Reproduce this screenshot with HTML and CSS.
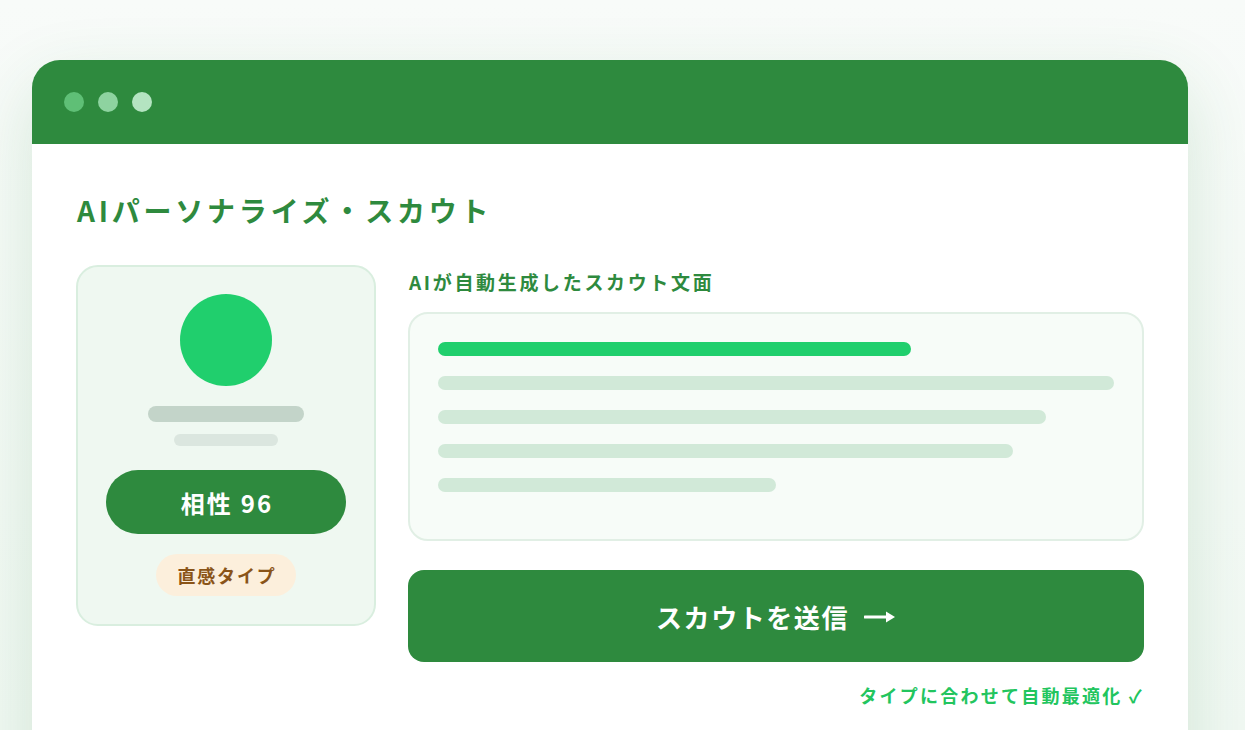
FILE: index.html
```html
<!DOCTYPE html>
<html lang="ja">
<head>
<meta charset="utf-8">
<title>AIパーソナライズ・スカウト</title>
<link rel="stylesheet" href="styles.css">
</head>
<body>
<div class="page">
  <div class="window">
    <div class="titlebar">
      <span class="dot d1"></span>
      <span class="dot d2"></span>
      <span class="dot d3"></span>
    </div>
    <div class="content">
      <h1 class="title">AIパーソナライズ・スカウト</h1>
      <div class="main">
        <div class="profile">
          <div class="avatar"></div>
          <div class="bar name"></div>
          <div class="bar sub"></div>
          <div class="score">相性 96</div>
          <div class="tag">直感タイプ</div>
        </div>
        <div class="right">
          <div class="label">AIが自動生成したスカウト文面</div>
          <div class="textbox">
            <div class="line accent" style="width:70%"></div>
            <div class="line" style="width:100%"></div>
            <div class="line" style="width:90%"></div>
            <div class="line" style="width:85%"></div>
            <div class="line" style="width:50%"></div>
          </div>
          <button class="send"><span class="send-text">スカウトを送信</span><svg class="arrow" width="32" height="14" viewBox="0 0 32 14"><path d="M1 7 H24" stroke="#ffffff" stroke-width="3" stroke-linecap="round"/><path d="M22 1.5 L31 7 L22 12.5 Z" fill="#ffffff"/></svg></button>
          <div class="note">タイプに合わせて自動最適化 ✓</div>
        </div>
      </div>
    </div>
  </div>
</div>
</body>
</html>
```

FILE: styles.css
```css
* { box-sizing: border-box; }
html, body { margin: 0; padding: 0; }
body {
  width: 1245px;
  height: 730px;
  overflow: hidden;
  background: linear-gradient(180deg, #f8fbf9 0%, #f1f8f3 100%);
  font-family: "Noto Sans CJK JP", "Noto Sans", sans-serif;
}
.page {
  padding: 60px 0 0 32px;
}
.window {
  width: 1156px;
  height: 760px;
  background: #ffffff;
  border-radius: 28px 28px 0 0;
  overflow: hidden;
  box-shadow: 0 24px 70px rgba(46, 139, 62, 0.16);
}
.titlebar {
  height: 84px;
  background: #2e8a3e;
  display: flex;
  align-items: center;
  gap: 14px;
  padding-left: 32px;
}
.dot {
  width: 20px;
  height: 20px;
  border-radius: 50%;
}
.d1 { background: #5fbf76; }
.d2 { background: #8ed3a0; }
.d3 { background: #b4e4c1; }
.content {
  padding: 46px 44px 0 44px;
}
.title {
  margin: 0;
  font-size: 28px;
  line-height: 40px;
  font-weight: 700;
  letter-spacing: 0.135em;
  color: #2e8a3e;
  padding-left: 1px;
}
.main {
  display: flex;
  gap: 32px;
  margin-top: 35px;
}
.profile {
  width: 300px;
  height: 361px;
  background: #eff8f1;
  border: 2px solid #d9eedf;
  border-radius: 22px;
  display: flex;
  flex-direction: column;
  align-items: center;
  padding-top: 27px;
}
.avatar {
  width: 92px;
  height: 92px;
  border-radius: 50%;
  background: #20cf6d;
}
.bar { border-radius: 8px; }
.name {
  width: 156px;
  height: 16px;
  background: #c3d4c9;
  margin-top: 20px;
}
.sub {
  width: 104px;
  height: 12px;
  background: #dbe6df;
  margin-top: 12px;
}
.score {
  width: 240px;
  height: 64px;
  margin-top: 24px;
  border-radius: 32px;
  background: #2e8a3e;
  color: #ffffff;
  font-size: 24px;
  font-weight: 700;
  letter-spacing: 0.09em;
  display: flex;
  align-items: center;
  justify-content: center;
  padding-left: 2px;
}
.tag {
  width: 140px;
  height: 42px;
  margin-top: 20px;
  border-radius: 21px;
  background: #fcefdc;
  color: #8a5418;
  font-size: 18px;
  font-weight: 700;
  letter-spacing: 0.1em;
  display: flex;
  align-items: center;
  justify-content: center;
  padding-left: 2px;
}
.right {
  flex: 1;
  display: flex;
  flex-direction: column;
}
.label {
  font-size: 19px;
  line-height: 26px;
  font-weight: 700;
  letter-spacing: 0.14em;
  color: #2e8a3e;
  margin-top: 4px;
  padding-left: 1px;
}
.textbox {
  margin-top: 17px;
  height: 229px;
  background: #f7fcf8;
  border: 2px solid #e1efe5;
  border-radius: 20px;
  padding: 28px 28px 0 28px;
  display: flex;
  flex-direction: column;
  gap: 20px;
}
.line {
  height: 14px;
  border-radius: 7px;
  background: #d1e9d8;
}
.line.accent { background: #20cf6d; }
.send {
  margin-top: 29px;
  height: 92px;
  border: none;
  border-radius: 16px;
  background: #2e8a3e;
  color: #ffffff;
  font-family: inherit;
  font-size: 26px;
  font-weight: 700;
  display: flex;
  align-items: center;
  justify-content: center;
  gap: 15px;
  padding: 0;
}
.send-text {
  letter-spacing: 0.06em;
}
.arrow {
  display: block;
  margin-top: 2px;
}
.note {
  margin-top: 20px;
  text-align: right;
  font-size: 18px;
  font-weight: 700;
  letter-spacing: 0.125em;
  color: #22c55e;
  line-height: 26px;
}
```
